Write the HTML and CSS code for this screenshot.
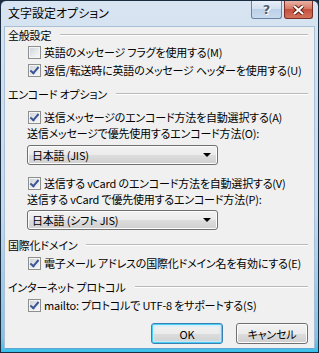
FILE: index.html
```html
<!DOCTYPE html>
<html lang="ja">
<head>
    <meta charset="UTF-8">
    <title>文字設定オプション</title>
    <link rel="stylesheet" href="styles.css">
</head>
<body>
    <div class="window">
        <div class="title-bar">
            <span class="title">文字設定オプション</span>
            <div class="caption-buttons">
                <div class="cap-btn help">?</div>
                <div class="cap-btn close">
                    <svg width="13" height="10" viewBox="0 0 13 10"><path d="M2 1 L11 9 M11 1 L2 9" stroke="#5a1a10" stroke-width="4"/><path d="M2 1 L11 9 M11 1 L2 9" stroke="#fff" stroke-width="2.2"/></svg>
                </div>
            </div>
        </div>
        <div class="content">
            <div class="group-title g-first"><span>全般設定</span></div>
            <div class="check"><span class="box"></span>英語のメッセージ フラグを使用する(M)</div>
            <div class="check"><span class="box checked"></span>返信/転送時に英語のメッセージ ヘッダーを使用する(U)</div>

            <div class="group-title g-next"><span>エンコード オプション</span></div>
            <div class="check c-after-title"><span class="box checked"></span>送信メッセージのエンコード方法を自動選択する(A)</div>
            <div class="field-label">送信メッセージで優先使用するエンコード方法(O):</div>
            <div class="select s-first"><span>日本語 (JIS)</span><span class="arrow"></span></div>
            <div class="check c-after-select"><span class="box checked"></span>送信する vCard のエンコード方法を自動選択する(V)</div>
            <div class="field-label">送信する vCard で優先使用するエンコード方法(P):</div>
            <div class="select s-next"><span>日本語 (シフト JIS)</span><span class="arrow"></span></div>

            <div class="group-title g-next"><span>国際化ドメイン</span></div>
            <div class="check c-tight"><span class="box checked"></span>電子メール アドレスの国際化ドメイン名を有効にする(E)</div>

            <div class="group-title g-next"><span>インターネット プロトコル</span></div>
            <div class="check c-tight"><span class="box checked"></span>mailto: プロトコルで UTF-8 をサポートする(S)</div>

            <div class="button-row">
                <button class="default">OK</button>
                <button>キャンセル</button>
            </div>
        </div>
    </div>
</body>
</html>
```

FILE: styles.css
```css
body {
    margin: 0;
    padding: 0;
    font-family: "Noto Sans CJK JP", "Noto Sans", sans-serif;
    font-size: 11px;
    font-weight: 400;
    letter-spacing: -0.2px;
    font-feature-settings: "palt" 1;
    color: #000;
    background: #1b2d40;
}
.window {
    width: 319px;
    height: 353px;
    box-sizing: border-box;
    border: 1px solid #1b2d40;
    border-radius: 6px 6px 0 0;
    background: linear-gradient(to bottom, #d8e4f1 0%, #c6d9ee 60%, #7fc3e6 96%, #38c0ea 100%);
    padding: 0 3px 3px 3px;
    display: flex;
    flex-direction: column;
}
.title-bar {
    height: 25px;
    display: flex;
    justify-content: space-between;
    align-items: flex-start;
}
.title {
    padding: 4px 0 0 4px;
    line-height: 16px;
    font-size: 12px;
    letter-spacing: 0;
}
.caption-buttons {
    display: flex;
    gap: 2px;
    margin-right: 2px;
}
.cap-btn {
    height: 18px;
    box-sizing: border-box;
    border: 1px solid #6b84a3;
    border-top: none;
    border-radius: 0 0 3px 3px;
    display: flex;
    align-items: center;
    justify-content: center;
}
.help {
    width: 31px;
    background: linear-gradient(to bottom, #e9f0f8 0%, #d3e0ef 45%, #bcd0e8 50%, #c8dbef 100%);
    font-family: "DejaVu Sans", sans-serif;
    font-weight: bold;
    font-size: 13px;
    color: #4d5e72;
    text-shadow: 0 0 1px #fff, 1px 1px 0 #fff;
}
.close {
    width: 29px;
    border-color: #7a2e24;
    background: linear-gradient(to bottom, #eab2a6 0%, #d77a68 45%, #c5503d 50%, #d2735c 100%);
}
.content {
    flex: 1;
    background: #f0f0f0;
    border: 1px solid #a9bfd6;
    border-bottom-color: #5fa6cf;
    padding: 0 6px 0 3px;
}
.group-title {
    height: 16px;
    line-height: 16px;
    display: flex;
    align-items: center;
}
.group-title::after {
    content: "";
    flex: 1;
    margin-left: 9px;
    border-top: 1px solid #b9b9b9;
    border-bottom: 1px solid #fff;
}
.g-first {
    margin-top: 0;
}
.g-next {
    margin-top: 7px;
}
.check {
    height: 18px;
    display: flex;
    align-items: center;
    padding-left: 20px;
    white-space: nowrap;
}
.c-after-title {
    margin-top: 6px;
}
.c-after-select {
    margin-top: 9px;
}
.c-tight {
    margin-top: 1px;
}
.box {
    width: 13px;
    height: 13px;
    box-sizing: border-box;
    border: 1px solid #8e8f8f;
    background: linear-gradient(135deg, #cbcfd5 0%, #e8eaec 55%, #f7f7f7 100%);
    box-shadow: inset 0 0 0 1px #f4f4f4;
    margin-right: 3px;
    flex: none;
    position: relative;
}
.box.checked::after {
    content: "";
    position: absolute;
    left: 3px;
    top: 0px;
    width: 3px;
    height: 7px;
    border: solid #3b5597;
    border-width: 0 2px 2px 0;
    transform: rotate(40deg);
}
.field-label {
    height: 14px;
    line-height: 14px;
    padding-left: 19px;
    white-space: nowrap;
}
.select {
    width: 191px;
    height: 20px;
    box-sizing: border-box;
    margin-left: 19px;
    border: 1px solid #707070;
    border-radius: 3px;
    background: linear-gradient(to bottom, #f2f2f2 0%, #ebebeb 50%, #dddddd 51%, #cfcfcf 100%);
    box-shadow: inset 0 0 0 1px #fcfcfc;
    display: flex;
    align-items: center;
    justify-content: space-between;
    padding: 0 6px 0 4px;
}
.s-first {
    margin-top: 5px;
}
.s-next {
    margin-top: 4px;
}
.arrow {
    width: 0;
    height: 0;
    border-left: 4px solid transparent;
    border-right: 4px solid transparent;
    border-top: 4px solid #000;
}
.button-row {
    display: flex;
    justify-content: flex-end;
    gap: 13px;
    margin-top: 9px;
}
.button-row button {
    width: 72px;
    height: 21px;
    font-family: inherit;
    font-size: 11px;
    letter-spacing: -0.2px;
    font-feature-settings: "palt" 1;
    border: 1px solid #707070;
    border-radius: 3px;
    background: linear-gradient(to bottom, #f2f2f2 0%, #ebebeb 50%, #dddddd 51%, #cfcfcf 100%);
    box-shadow: inset 0 0 0 1px #fcfcfc;
    padding: 0;
}
.button-row button.default {
    border-color: #3c7fb1;
    box-shadow: inset 0 0 0 1px #48d0f8, inset 0 0 2px 2px #c6ecfc;
}
```
